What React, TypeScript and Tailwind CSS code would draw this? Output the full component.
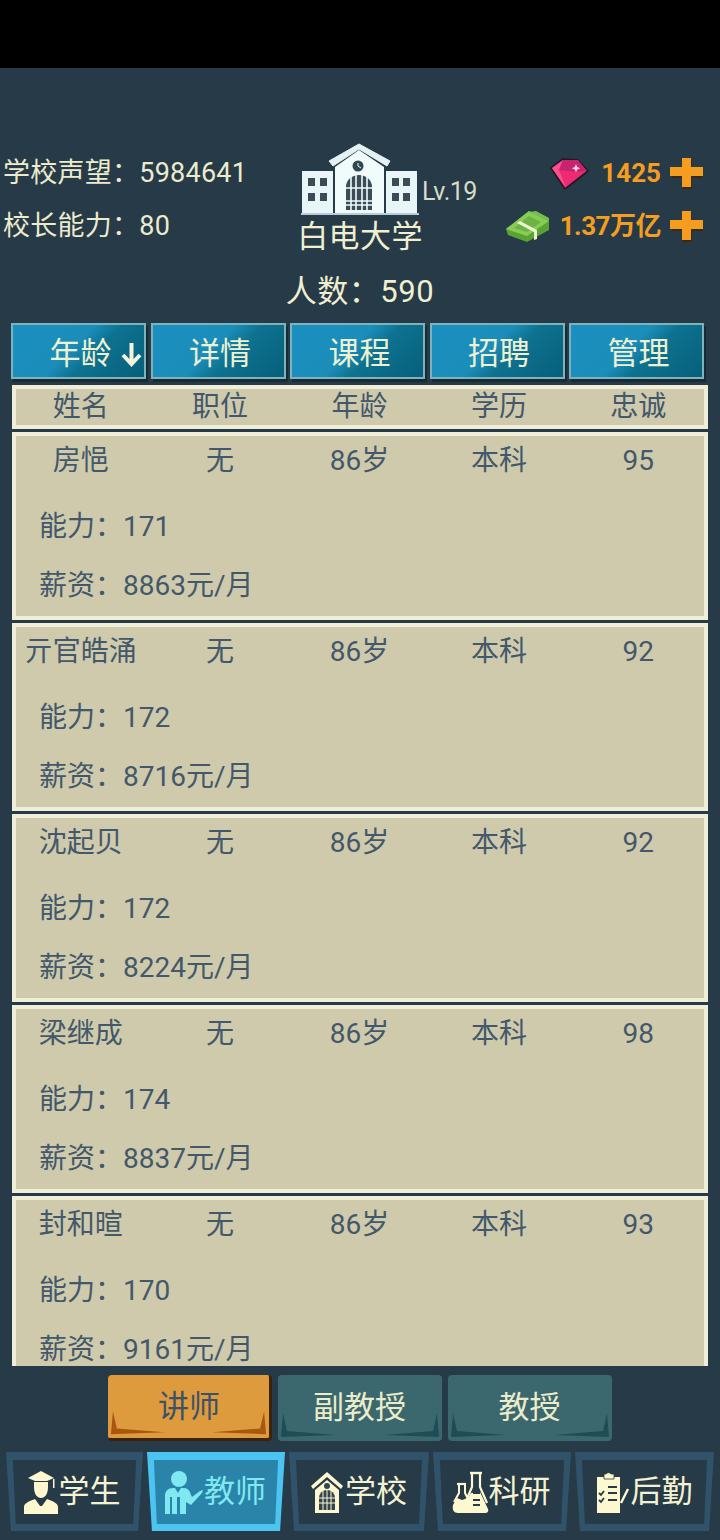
import React from "react";

const FONT = { fontFamily: 'Roboto, "Noto Sans CJK SC", sans-serif' };

const Building = () => (
  <svg width="118" height="72" viewBox="0 0 118 72">
    <path d="M1 28h31v42H1z" fill="#e8f6f7" />
    <path d="M85 28h31v42H85z" fill="#e8f6f7" />
    <path d="M34 24 58 7l25 17v47H34z" fill="#f0fbfc" />
    <path d="M28 18 58 1l31 17-3 5L58 6 32 23z" fill="#e4f2f4" stroke="#e4f2f4" strokeWidth="1" strokeLinejoin="round" />
    <circle cx="57" cy="23" r="5.5" fill="#33474f" />
    <path d="M57 20v3l3 2" stroke="#f0fbfc" strokeWidth="1" fill="none" />
    <path d="M45 67V44a13 12 0 0 1 26 0v23z" fill="#3a4c55" />
    <path d="M50 33v34M55 32v35M61 32v35M66 33v34M45 45h26M45 58h26M45 62h26" stroke="#f0fbfc" strokeWidth="1.6" />
    {[7, 19, 91, 102].map((x) => (
      <g key={x} fill="#3a4c55">
        <rect x={x} y="35" width="7" height="8" />
        <rect x={x} y="50" width="7" height="8" />
      </g>
    ))}
    <path d="M0 70h118v2H0z" fill="#b8cdd1" />
  </svg>
);

const Gem = () => (
  <svg width="40" height="34" viewBox="0 0 40 34">
    <path d="M1 11 13 2l15 1 10 11-23 18z" fill="#ef2a72" stroke="#1d1b24" strokeWidth="1.6" strokeLinejoin="round" />
    <path d="M13 3 9 13l7 18L2 11z" fill="#ff4f8f" />
    <path d="M13 3l15 0 9 11-11 1-17-2z" fill="#c8246d" />
    <path d="M26 7l1.2 3 3 1.2-3 1.2-1.2 3-1.2-3-3-1.2 3-1.2z" fill="#ffd6e8" />
  </svg>
);

const Cash = () => (
  <svg width="45" height="33" viewBox="0 0 45 33">
    <path d="M1 19 24 1l20 10v9L22 32 3 25z" fill="#58a334" />
    <path d="M1 19 24 1l20 10-22 15z" fill="#86cc56" />
    <path d="M9 18 24 6l12 6-14 10z" fill="#6db344" />
    <path d="M12 13 15 11 32 20v9l-3 1v-8z" fill="#eef2d0" />
    <path d="M24 2l7-1 13 7v3z" fill="#79bd4a" />
  </svg>
);

const Plus = () => (
  <svg width="33" height="33" viewBox="0 0 33 33">
    <path d="M13 3h9v9h11v9H22v11h-9V21H2v-9h11z" fill="#3a2a12" />
    <path d="M12 1h9v9h12v9H21v11h-9V19H0v-9h12z" fill="#f59d1f" />
  </svg>
);

const Corners = ({ color }: { color: string }) => (
  <svg className="absolute inset-0 w-full h-full" viewBox="0 0 164 66" preserveAspectRatio="none">
    <path d="M5 38 3 62 58 60 9 56z" fill={color} />
    <path d="M159 38 161 62 106 60 155 56z" fill={color} />
  </svg>
);

const Student = () => (
  <svg width="36" height="46" viewBox="0 0 36 46" fill="#fdf8d0">
    <path d="M18 2 31 9l-7 3H12L5 9z" />
    <path d="M30 10h1.5v9H30z" />
    <path d="M11 13h14v5c0 7-3 11-7 11s-7-4-7-11z" />
    <path d="M1 45v-7c0-4 6-6 11-8l5 7h2l5-7c5 2 11 4 11 8v7z" />
  </svg>
);
const Teacher = () => (
  <svg width="40" height="46" viewBox="0 0 40 46" fill="#7fe8f0">
    <circle cx="15" cy="10" r="8" />
    <path d="M1 45V27c0-5 3-8 8-8h2l3 5 3-5h3c4 0 6 3 7 7l1 2 8-6 3-1-1 3-11 12-5-3v12h-6V28h-3v17h-5V28H6v17z" />
  </svg>
);
const School = () => (
  <svg width="32" height="42" viewBox="0 0 32 42">
    <path d="M16 1 32 15l-2 3L16 6 2 18l-2-3z" fill="#fdf8d0" />
    <path d="M4 19 16 9l12 10v23H4z" fill="#fdf8d0" />
    <circle cx="16" cy="15" r="3" fill="#33454f" />
    <path d="M8 39V27a8 8 0 0 1 16 0v12z" fill="#33454f" />
    <path d="M12 20v19M16 19v20M20 20v19M8 27h16M8 32h16" stroke="#fdf8d0" strokeWidth="1" />
  </svg>
);
const Flask = () => (
  <svg width="37" height="44" viewBox="0 0 37 44">
    <path d="M18 3h12" stroke="#fdf8d0" strokeWidth="2.4" />
    <path d="M20 3v14l-6 14M28 3v14l7 16" fill="none" stroke="#fdf8d0" strokeWidth="2.2" />
    <path d="M5 14h9" stroke="#fdf8d0" strokeWidth="2.2" />
    <path d="M7 14v9L2 32M13 14v9l2 4" fill="none" stroke="#fdf8d0" strokeWidth="2" />
    <path d="M5 28l5 2 6-2 3-5 9-1 8 17c1 3-1 4-3 4H6c-4 0-6-3-5-8z" fill="#fdf8d0" />
    <path d="M21 23h7M21 30h7M21 35h7" stroke="#263a47" strokeWidth="2" />
  </svg>
);
const Clip = () => (
  <svg width="36" height="46" viewBox="0 0 36 46">
    <path d="M2 8h23v36H2z" fill="#fdf8d0" />
    <path d="M9 5h2a3 3 0 0 1 5 0h3v5H9z" fill="#fdf8d0" stroke="#263a47" strokeWidth="0.8" />
    <path d="M13 18h9M13 24h9M13 31h9M4 24l2 2 3-4M4 31l2 2 3-4" stroke="#263a47" strokeWidth="1.8" fill="none" />
    <path d="M26 34 33 20" stroke="#fdf8d0" strokeWidth="2.4" />
  </svg>
);

const NavTab = ({ w, label, icon, active, iconW, shift }: { w: string; label: string; icon: React.ReactNode; active?: boolean; iconW: string; shift: string }) => (
  <div className={`relative h-[79px] ${w} flex items-center justify-center`}>
    <svg className="absolute inset-0 w-full h-full" viewBox="0 0 140 79" preserveAspectRatio="none">
      <path d="M0 0h140l-5 79H5z" fill={active ? "#4cc4f2" : "#31536a"} />
      <path d="M7 8h126l-3 64H10z" fill={active ? "#2a84aa" : "#263a47"} />
    </svg>
    <div className={`relative ${shift} flex items-center`}>
      <div className={`${iconW} flex justify-center`}>{icon}</div>
      <span className={`text-[31px] leading-[40px] ${active ? "text-[#7fe8f0]" : "text-[#f4f2d2]"}`}>{label}</span>
    </div>
  </div>
);

const SubTab = ({ label, active }: { label: string; active?: boolean }) => (
  <div
    className={`relative w-[164px] h-[66px] rounded-[4px] flex items-center justify-center ${
      active ? "bg-[#dd9b3e] border-r-[3px] border-b-[3px] border-[#3c2208]" : "bg-[#3b686e]"
    }`}
  >
    <Corners color={active ? "#a9570f" : "#1f4d55"} />
    <span className={`relative text-[31px] leading-[40px] ${active ? "left-[1px] text-[#3d5266]" : "text-[#ebecca]"}`}>{label}</span>
  </div>
);

const COLS = "grid grid-cols-5 text-center w-[697px] -ml-[5px]";

const rows = [
  ["房悒", "95", "171", "8863"],
  ["亓官皓涌", "92", "172", "8716"],
  ["沈起贝", "92", "172", "8224"],
  ["梁继成", "98", "174", "8837"],
  ["封和暄", "93", "170", "9161"],
];

export default function App() {
  return (
    <div style={FONT} className="w-[720px] h-[1540px] bg-[#263a47] overflow-hidden flex flex-col">
      <div className="h-[68px] bg-black shrink-0" />

      <div className="h-[255px] shrink-0 grid grid-cols-[300px_120px_300px]">
        <div className="pt-[79px] pl-[3px] text-[27px] text-[#ecebce] tracking-[0.25px]">
          <div className="h-[53px] leading-[53px]">学校声望：5984641</div>
          <div className="h-[53px] leading-[53px]">校长能力：80</div>
        </div>
        <div className="pt-[75px] flex flex-col items-center relative">
          <Building />
          <div className="absolute left-[122px] top-[109px] text-[25px] leading-[30px] text-[#d8dcc8] whitespace-nowrap tracking-[-0.5px]">Lv.19</div>
          <div className="text-[31px] leading-[42px] text-[#f0efd0] mt-[1px] whitespace-nowrap tracking-[0.4px]">白电大学</div>
          <div className="text-[31px] leading-[42px] text-[#f0efd0] mt-[13px] whitespace-nowrap tracking-[0.5px]">人数：590</div>
        </div>
        <div className="pt-[79px] pr-[17px] flex flex-col items-end">
          <div className="h-[53px] flex items-center">
            <Gem />
            <span className="ml-[11px] mr-[9px] text-[26px] font-bold text-[#f59d1f]">1425</span>
            <Plus />
          </div>
          <div className="h-[53px] flex items-center">
            <Cash />
            <span className="ml-[10px] mr-[9px] text-[26px] font-bold text-[#f59d1f] tracking-[-0.5px]">1.37万亿</span>
            <Plus />
          </div>
        </div>
      </div>

      <div className="pl-[11px] pr-[16px] grid grid-cols-5 gap-x-[4.5px] shrink-0">
        {["年龄", "详情", "课程", "招聘", "管理"].map((t, i) => (
          <div
            key={t}
            className="relative h-[56px] border-2 border-[#7db3bd] bg-[linear-gradient(135deg,#1a8fc0_0%,#1b8db9_45%,#0d7290_60%,#075f79_100%)] shadow-[2px_3px_0_#1a2a33] flex items-center justify-center"
          >
            <span className="text-[31px] leading-[40px] text-[#eef0d2] relative top-[3px] left-[2px]">{t}</span>
            {i === 0 && (
              <svg className="absolute left-[108px] top-[16px]" width="21" height="26" viewBox="0 0 21 26">
                <path d="M10.5 2v20M2 14l8.5 9 8.5-9" fill="none" stroke="#f4f4dc" strokeWidth="4" />
              </svg>
            )}
          </div>
        ))}
      </div>

      <div className="mt-[6px] ml-[12px] w-[696px] h-[44px] shrink-0 border-[4px] border-[#f0eed8] bg-[#cfcaac] text-[28px] text-[#43586a]">
        <div className={`${COLS} leading-[36px]`}>
          {["姓名", "职位", "年龄", "学历", "忠诚"].map((t) => (
            <div key={t}>{t}</div>
          ))}
        </div>
      </div>

      <div className="mt-[3px] ml-[12px] w-[696px] h-[934px] shrink-0 overflow-hidden flex flex-col gap-[3px]">
        {rows.map((r) => (
          <div key={r[0]} className="h-[188px] shrink-0 border-[4px] border-[#f0eed8] bg-[#cfcaac] text-[28px] text-[#43586a]">
            <div className={`${COLS} mt-[3px] h-[44px] leading-[44px]`}>
              <div>{r[0]}</div>
              <div>无</div>
              <div>86岁</div>
              <div>本科</div>
              <div>{r[1]}</div>
            </div>
            <div className="pl-[23px] mt-[26px] h-[36px] leading-[36px]">能力：{r[2]}</div>
            <div className="pl-[23px] mt-[23px] h-[36px] leading-[36px]">薪资：{r[3]}元/月</div>
          </div>
        ))}
      </div>

      <div className="mt-[9px] flex justify-center gap-[6px] shrink-0 pr-[1px]">
        <SubTab label="讲师" active />
        <SubTab label="副教授" />
        <SubTab label="教授" />
      </div>

      <div className="mt-[11px] pl-[6px] pr-[6px] flex justify-between shrink-0">
        <NavTab w="w-[137px]" iconW="w-[36px]" shift="right-[3px]" label="学生" icon={<Student />} />
        <NavTab w="w-[138px]" iconW="w-[40px]" shift="right-[1px]" label="教师" icon={<Teacher />} active />
        <NavTab w="w-[140px]" iconW="w-[36px]" shift="right-[1px]" label="学校" icon={<School />} />
        <NavTab w="w-[138px]" iconW="w-[37px]" shift="right-[1px]" label="科研" icon={<Flask />} />
        <NavTab w="w-[139px]" iconW="w-[36px]" shift="right-[1px]" label="后勤" icon={<Clip />} />
      </div>
    </div>
  );
}
